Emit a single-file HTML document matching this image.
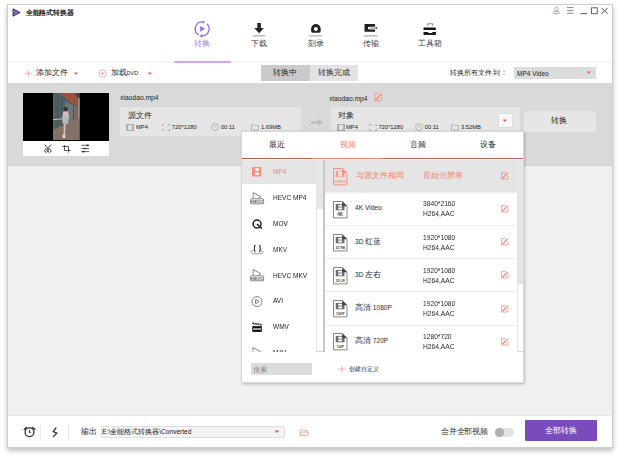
<!DOCTYPE html>
<html><head><meta charset="utf-8">
<style>
*{margin:0;padding:0;box-sizing:border-box;}
html,body{width:620px;height:459px;overflow:hidden;background:#fff;font-family:"Liberation Sans",sans-serif;color:#333;}
.a{position:absolute;white-space:nowrap;}
#win{position:absolute;left:7px;top:4px;width:606px;height:443.6px;background:#fff;border:1px solid #cdcdcd;box-shadow:0 2.5px 5px rgba(0,0,0,.27);}
.cj{font-size:7.5px;line-height:1;}
.cj2{font-size:7.5px;}
</style></head><body>
<div id="win"></div>

<!-- header -->
<svg class="a" style="left:12px;top:8px" width="9" height="9" viewBox="0 0 9 9"><path d="M1 0.8 L8.2 4.5 L1 8.2 Z" fill="#8a5cd6" stroke="#3a3a3a" stroke-width="0.9" stroke-linejoin="round"/></svg>
<div class="a" style="left:25.7px;top:9.9px;font-size:6.8px;letter-spacing:-0.15px;font-weight:bold;color:#222;line-height:1">全能格式转换器</div>

<!-- window controls -->
<svg class="a" style="left:550px;top:5px" width="60" height="12" viewBox="0 0 60 12">
  <g fill="none" stroke="#b88ef0" stroke-width="1"><path d="M6.4 6.2 L5.1 4.6 A1.6 1.6 0 1 1 7.7 4.6Z"/><ellipse cx="6.4" cy="7.5" rx="3.3" ry="1.25"/></g>
  <g stroke="#777" stroke-width="0.9"><path d="M17 2.6h6.6M17 5.4h6.6M17 8.2h6.6"/></g>
  <path d="M30.6 8.6h6.4" stroke="#666" stroke-width="1.1"/>
  <rect x="41.5" y="2.8" width="5.8" height="5.9" fill="none" stroke="#666" stroke-width="1"/>
  <path d="M51.6 2.8l6 6M57.6 2.8l-6 6" stroke="#555" stroke-width="1"/>
</svg>

<!-- nav -->
<svg class="a" style="left:194px;top:20px" width="17" height="18" viewBox="0 0 17 18">
  <g fill="none" stroke="#9c6ce6" stroke-width="1.35" stroke-linecap="round">
    <path d="M4.09 14.56 A7 7 0 0 1 8.4 1.9"/>
    <path d="M13.4 4.22 A7 7 0 0 1 8.0 15.9"/>
  </g>
  <path d="M8.6 0.2 L11.2 1.95 L8.6 3.7Z" fill="#9c6ce6"/>
  <path d="M8.1 14.1 L5.4 15.9 L8.1 17.7Z" fill="#9c6ce6"/>
  <path d="M6.1 6 L11.1 8.85 L6.1 11.7Z" fill="#9c6ce6"/>
</svg>
<div class="a cj" style="left:194px;top:40px;color:#a27ae4;font-size:7.5px">转换</div>

<svg class="a" style="left:252px;top:22px" width="14" height="15" viewBox="0 0 14 15">
  <path d="M5.3 1 h3.6 v4.9 h3 L7.1 11.2 2.2 5.9 h3.1z" fill="#252525"/>
  <rect x="1" y="13.1" width="12" height="1.4" fill="#b5b5b5"/>
</svg>
<div class="a cj" style="left:251.2px;top:40px;color:#3c3c3c;font-size:7.5px">下载</div>

<svg class="a" style="left:308px;top:22px" width="16" height="15" viewBox="0 0 16 15">
  <path fill-rule="evenodd" d="M3.1 6.9 A4.8 4.8 0 0 1 12.7 6.9 V9.1 Q12.7 10.7 11.1 10.7 H4.7 Q3.1 10.7 3.1 9.1 Z M5.9 6.9 A2 2 0 1 0 9.9 6.9 A2 2 0 1 0 5.9 6.9Z" fill="#222"/>
  <rect x="1.1" y="13.1" width="12.9" height="1.5" fill="#bdbdbd"/>
</svg>
<div class="a cj" style="left:307.5px;top:40px;color:#3c3c3c;font-size:7.5px">刻录</div>

<svg class="a" style="left:362px;top:22px" width="18" height="15" viewBox="0 0 18 15">
  <path d="M2.5 1.9 H12.6 Q13.1 1.9 13.1 2.4 V4.7 H7.2 A1.35 1.35 0 0 0 7.2 7.4 H13.1 V9.3 Q13.1 9.8 12.6 9.8 H2.5 Z" fill="#1e1e1e"/>
  <path d="M7.4 6.05 H14" stroke="#666" stroke-width="0.7"/>
  <circle cx="14.4" cy="6.1" r="0.95" fill="#333"/>
  <rect x="1.5" y="13.1" width="14.3" height="1.5" fill="#bdbdbd"/>
</svg>
<div class="a cj" style="left:363px;top:40px;color:#3c3c3c;font-size:7.5px">传输</div>

<svg class="a" style="left:422px;top:22px" width="16" height="14" viewBox="0 0 16 14">
  <path d="M5.6 3.7 V2.4 Q5.6 1.7 6.3 1.7 H10.1 Q10.8 1.7 10.8 2.4 V3.7" fill="none" stroke="#8a8a8a" stroke-width="1.1"/>
  <rect x="1.5" y="5.5" width="12.4" height="2.6" rx="0.4" fill="#1a1a1a"/>
  <path d="M1.5 10 H5.8 L6.8 11 H9.7 L10.7 10 H13.9 V12.9 H1.5 Z" fill="#1a1a1a"/>
</svg>
<div class="a cj" style="left:417.8px;top:40px;color:#3c3c3c;font-size:7.5px">工具箱</div>

<!-- nav underline -->
<div class="a" style="left:8px;top:61px;width:604px;height:2px;background:#f6f4fa"></div>
<div class="a" style="left:174px;top:61px;width:57px;height:2px;background:#cfa6f6"></div>

<!-- toolbar -->
<svg class="a" style="left:24px;top:69px" width="9" height="9" viewBox="0 0 9 9"><path d="M4.3 1v6.6M1 4.3h6.6" stroke="#f59a8b" stroke-width="0.8"/></svg>
<div class="a cj" style="left:35.5px;top:69.3px;color:#262626">添加文件</div>
<svg class="a" style="left:73px;top:72px" width="6" height="4" viewBox="0 0 6 4"><path d="M0.5 0.5h4.6L2.8 3z" fill="#f06a5a"/></svg>

<svg class="a" style="left:98px;top:68.5px" width="9" height="9" viewBox="0 0 9 9"><circle cx="4.5" cy="4.5" r="3.6" fill="none" stroke="#f59a8b" stroke-width="0.75"/><circle cx="4.5" cy="4.5" r="1.2" fill="#f59a8b"/></svg>
<div class="a cj" style="left:110.5px;top:69.3px;color:#262626">加载<span style="font-size:5.6px">DVD</span></div>
<svg class="a" style="left:146.5px;top:72px" width="6" height="4" viewBox="0 0 6 4"><path d="M0.5 0.5h4.6L2.8 3z" fill="#f06a5a"/></svg>

<div class="a" style="left:261px;top:65px;width:49px;height:16px;background:#cacaca"></div>
<div class="a" style="left:310px;top:65px;width:48px;height:16px;background:#e3e3e3"></div>
<div class="a cj" style="left:273px;top:69.3px;color:#262626;font-size:7.5px">转换中</div>
<div class="a cj" style="left:318px;top:69.3px;color:#262626;font-size:7.5px">转换完成</div>

<div class="a cj" style="left:449.7px;top:69px;color:#262626;font-size:7.4px;letter-spacing:0.15px">转换所有文件到<span style="margin-left:3.3px">:</span></div>
<div class="a" style="left:514px;top:66.5px;width:82px;height:12px;background:#dcdcdc"></div>
<div class="a" style="left:517px;top:70.6px;font-size:6.5px;line-height:1;color:#222">MP4 Video</div>
<svg class="a" style="left:585.6px;top:71.3px" width="6" height="4" viewBox="0 0 6 4"><path d="M0.5 0.5h4.6L2.8 3z" fill="#f06a5a"/></svg>

<!-- gray item area -->
<div class="a" style="left:8px;top:82.6px;width:604px;height:82.6px;background:#d9d9d9"></div>
<div class="a" style="left:8px;top:164.8px;width:604px;height:250px;background:#f0f0ef;border-top:1px solid #d3d3d3"></div>

<!-- thumbnail -->
<div class="a" style="left:23px;top:93px;width:86px;height:47.5px;background:#000"></div>
<svg class="a" style="left:52.9px;top:93.2px" width="26.8" height="47.2" viewBox="0 0 26.8 47.2">
  <defs><filter id="bl" x="-10%" y="-10%" width="120%" height="120%"><feGaussianBlur stdDeviation="0.7"/></filter><clipPath id="cp"><rect width="26.8" height="47.2"/></clipPath></defs>
  <g clip-path="url(#cp)"><g filter="url(#bl)">
  <rect x="-2" y="-2" width="31" height="52" fill="#4f5e62"/>
  <path d="M12 8 L26.8 16 V27 L12 32Z" fill="#68787b"/>
  <path d="M4.5 0 V40 M20.5 12 V30 M9 6 V36" stroke="#415053" stroke-width="0.8"/>
  <path d="M5 -1 H21.7 L25.1 5 V15.8Z" fill="#99513b"/>
  <path d="M21.7 -1 H28 V7 L25.1 5Z" fill="#3e4747"/>
  <rect x="25.1" y="5" width="3" height="44" fill="#8d9799"/>
  <rect x="21.4" y="16" width="3.7" height="13" fill="#8e6252"/>
  <path d="M-1 37 L28 24.5 V49 H-1Z" fill="#857266"/>
  <path d="M0 26.6 L9.5 26" stroke="#b9c3c5" stroke-width="1"/>
  <circle cx="12.8" cy="16.2" r="2.1" fill="#393332"/>
  <path d="M10 18.6 H15.5 L16 26 H9.5Z" fill="#d2c2b9"/>
  <path d="M9.2 23 H15.6 L15.3 30.8 H9.5Z" fill="#b9b8b5"/>
  <path d="M15.4 19 L18.2 21.5 L16 23Z" fill="#9b6a50"/>
  <path d="M10.6 30.8 H12.8 L12 43.5 H10.6Z" fill="#cfbcb2"/>
  <path d="M9.6 41.5 H12.3 V45 H9.6Z" fill="#dcdcdc"/>
  </g></g>
</svg>
<div class="a" style="left:23px;top:140.5px;width:86px;height:15px;background:#fff"></div>
<!-- tool icons -->
<svg class="a" style="left:43px;top:143px" width="10" height="11" viewBox="0 0 10 11">
  <g fill="none" stroke="#3a3a3a" stroke-width="0.9"><path d="M1.8 1.5 L5.6 6.3 M8.1 1.5 L4.3 6.3"/><circle cx="3.2" cy="7.7" r="1.55"/><circle cx="6.6" cy="7.7" r="1.55"/></g>
</svg>
<svg class="a" style="left:61px;top:144px" width="11" height="10" viewBox="0 0 11 10">
  <g fill="none" stroke="#3a3a3a" stroke-width="0.85"><path d="M3.5 1 V6.5 H9.6 M1.2 2.5 H7.5 V8.6"/></g>
</svg>
<svg class="a" style="left:81px;top:144px" width="10" height="10" viewBox="0 0 10 10">
  <g stroke="#3a3a3a" stroke-width="0.75"><path d="M0.3 1.3 H8.2 M0.3 4.5 H8.2 M0.3 7.6 H8.2"/></g>
  <g fill="#2a2a2a"><ellipse cx="6.6" cy="1.3" rx="1.3" ry="0.85"/><ellipse cx="3.9" cy="4.5" rx="1.3" ry="0.85"/><ellipse cx="2.4" cy="7.6" rx="1.3" ry="0.85"/></g>
</svg>

<!-- source name -->
<div class="a" style="left:120.2px;top:95px;font-size:6.7px;line-height:1;color:#222">xiaodao.mp4</div>
<div class="a" style="left:120px;top:107px;width:181px;height:29px;background:#e5e5e5"></div>
<div class="a cj" style="left:128px;top:111.5px;color:#262626">源文件</div>
<svg class="a" style="left:126.4px;top:123.5px" width="8" height="7" viewBox="0 0 8 7"><rect x="0.5" y="0.5" width="7" height="6" fill="none" stroke="#ababab" stroke-width="1"/><rect x="1" y="1" width="1.3" height="5" fill="#b8b8b8"/><rect x="5.7" y="1" width="1.3" height="5" fill="#b8b8b8"/></svg><svg class="a" style="left:161.9px;top:123.5px" width="8" height="7" viewBox="0 0 8 7"><path d="M0.5 2.3V0.5H2.3M5.7 0.5H7.5V2.3M7.5 4.7V6.5H5.7M2.3 6.5H0.5V4.7" fill="none" stroke="#ababab" stroke-width="0.9"/></svg><svg class="a" style="left:211.1px;top:123px" width="8" height="8" viewBox="0 0 8 8"><circle cx="4" cy="4" r="3.4" fill="none" stroke="#ababab" stroke-width="0.8"/><path d="M3.8 2.2V4.2H5.2" fill="none" stroke="#ababab" stroke-width="0.6"/></svg><svg class="a" style="left:250.6px;top:123.5px" width="8" height="7" viewBox="0 0 8 7"><path d="M0.5 0.8H3L3.8 1.6H7.5V6.2H0.5Z" fill="none" stroke="#ababab" stroke-width="0.8"/></svg><div class="a" style="left:136px;top:125.4px;font-size:5.8px;line-height:1;color:#1e1e1e">MP4</div><div class="a" style="left:171.8px;top:125.4px;font-size:5.8px;line-height:1;color:#1e1e1e">720*1280</div><div class="a" style="left:220.9px;top:125.4px;font-size:5.8px;line-height:1;color:#1e1e1e">00:11</div><div class="a" style="left:260.9px;top:125.4px;font-size:5.8px;line-height:1;color:#1e1e1e">1.69MB</div>

<!-- arrow -->
<svg class="a" style="left:310px;top:118px" width="14" height="9" viewBox="0 0 14 9"><path d="M1 3.3h7V0.8l5 3.7-5 3.7V5.7H1z" fill="#bdbdbd"/></svg>

<!-- target -->
<div class="a" style="left:329.2px;top:95.5px;font-size:6.7px;line-height:1;color:#222">xiaodao.mp4</div>
<svg class="a" style="left:373.5px;top:93px" width="9" height="9" viewBox="0 0 9 9"><path d="M5 0.7 H0.8 V7.8 H7.8 V3.7" fill="none" stroke="#f49a8a" stroke-width="0.95"/><path d="M1.9 6.8 L7.3 1.4" stroke="#f5897a" stroke-width="1.4" stroke-linecap="round"/></svg>
<div class="a" style="left:330.5px;top:107px;width:189px;height:29px;background:#e5e5e5"></div>
<div class="a cj" style="left:337.6px;top:111.8px;color:#262626">对象</div><svg class="a" style="left:336.5px;top:123.5px" width="8" height="7" viewBox="0 0 8 7"><rect x="0.5" y="0.5" width="7" height="6" fill="none" stroke="#ababab" stroke-width="1"/><rect x="1" y="1" width="1.3" height="5" fill="#b8b8b8"/><rect x="5.7" y="1" width="1.3" height="5" fill="#b8b8b8"/></svg><svg class="a" style="left:369px;top:123.5px" width="8" height="7" viewBox="0 0 8 7"><path d="M0.5 2.3V0.5H2.3M5.7 0.5H7.5V2.3M7.5 4.7V6.5H5.7M2.3 6.5H0.5V4.7" fill="none" stroke="#ababab" stroke-width="0.9"/></svg><svg class="a" style="left:415px;top:123px" width="8" height="8" viewBox="0 0 8 8"><circle cx="4" cy="4" r="3.4" fill="none" stroke="#ababab" stroke-width="0.8"/><path d="M3.8 2.2V4.2H5.2" fill="none" stroke="#ababab" stroke-width="0.6"/></svg><svg class="a" style="left:450.8px;top:123.5px" width="8" height="7" viewBox="0 0 8 7"><path d="M0.5 0.8H3L3.8 1.6H7.5V6.2H0.5Z" fill="none" stroke="#ababab" stroke-width="0.8"/></svg><div class="a" style="left:346px;top:125.4px;font-size:5.8px;line-height:1;color:#1e1e1e">MP4</div><div class="a" style="left:378.4px;top:125.4px;font-size:5.8px;line-height:1;color:#1e1e1e">720*1280</div><div class="a" style="left:424.7px;top:125.4px;font-size:5.8px;line-height:1;color:#1e1e1e">00:11</div><div class="a" style="left:461px;top:125.4px;font-size:5.8px;line-height:1;color:#1e1e1e">3.52MB</div>
<div class="a" style="left:497.5px;top:113.2px;width:15px;height:15.3px;background:#f8f8f8;border:1px solid #dcdcdc;border-radius:1.5px"></div>
<svg class="a" style="left:502px;top:119px" width="6" height="4" viewBox="0 0 6 4"><path d="M0.5 0.5h4.6L2.8 3z" fill="#f05a4a"/></svg>

<div class="a" style="left:524px;top:111px;width:72px;height:20.7px;background:#e6e6e6;border-radius:1.5px"></div>
<div class="a cj" style="left:551.3px;top:117.2px;color:#222;font-size:7.7px">转换</div>

<!-- footer -->
<div class="a" style="left:8px;top:414.5px;width:604px;height:1px;background:#e8e8e8"></div>
<svg class="a" style="left:23px;top:426px" width="13" height="13" viewBox="0 0 13 13">
  <circle cx="6.5" cy="6.3" r="4.4" fill="none" stroke="#2e2e2e" stroke-width="1.3"/>
  <path d="M1.2 3.4 L3.3 1.5 M11.8 3.4 L9.7 1.5" stroke="#2e2e2e" stroke-width="1.4" stroke-linecap="round"/>
  <path d="M5.9 3.9 H6.9 V5.6 L8.6 6.8 L5.9 6.8Z" fill="#2e2e2e"/>
</svg>
<div class="a" style="left:40px;top:424px;width:1px;height:16px;background:#ececec"></div>
<svg class="a" style="left:51px;top:427px" width="8" height="11" viewBox="0 0 8 11"><path d="M5 0.9 L2.2 4.6 L5.9 6 L2.4 9.6" fill="none" stroke="#2e2e2e" stroke-width="1.3" stroke-linecap="round" stroke-linejoin="round"/></svg>
<div class="a" style="left:68px;top:424px;width:1px;height:16px;background:#ececec"></div>
<div class="a cj" style="left:80.5px;top:427.9px;color:#262626">输出</div>
<div class="a" style="left:100.5px;top:425.5px;width:184px;height:12.5px;background:#f3f3f3;border:1px solid #dedede;border-radius:2px"></div>
<div class="a" style="left:102.3px;top:429px;font-size:6.55px;line-height:1;color:#222">E:\全能格式转换器\Converted</div>
<svg class="a" style="left:274px;top:430px" width="6" height="4" viewBox="0 0 6 4"><path d="M0.5 0.5h4.6L2.8 3z" fill="#f05a4a"/></svg>
<svg class="a" style="left:298.6px;top:428.6px" width="11" height="8" viewBox="0 0 11 8"><path d="M1 6.6 V0.7 H3.9 L4.6 1.6 H8.4 V2.9 M1 6.6 H8.5 L9.4 3.1 H2.4 L1 6.6" fill="none" stroke="#f5a090" stroke-width="0.85" stroke-linejoin="round"/></svg>

<div class="a cj" style="left:441px;top:427.8px;color:#333;font-size:7.5px;letter-spacing:-0.25px">合并全部视频</div>
<div class="a" style="left:494.5px;top:428px;width:19.5px;height:9px;border-radius:4.5px;background:#e2e2e2"></div>
<div class="a" style="left:494.5px;top:428px;width:9px;height:9px;border-radius:50%;background:#b0b0b0"></div>
<div class="a" style="left:525px;top:420px;width:72px;height:20.5px;background:#7a4bba;border-radius:1px"></div>
<div class="a cj" style="left:545px;top:427px;color:#fff">全部转换</div>

<!-- popup -->
<div class="a" style="left:241px;top:131.2px;width:282.5px;height:252px;background:#fff;border:1px solid #d8d8d8;box-shadow:0.5px 1px 3px rgba(0,0,0,.28)"></div>
<div class="a cj" style="left:269.1px;top:141px;color:#262626">最近</div>
<div class="a cj" style="left:339.6px;top:141px;color:#f2806e">视频</div>
<div class="a cj" style="left:410.0px;top:141px;color:#262626">音频</div>
<div class="a cj" style="left:480.3px;top:141px;color:#262626">设备</div>
<div class="a" style="left:242px;top:157.9px;width:281px;height:1.4px;background:#bd5d50"></div>
<div class="a" style="left:312.2px;top:157.9px;width:70.4px;height:1.4px;background:#f4826f"></div>
<div class="a" style="left:242px;top:159.5px;width:74px;height:192px;overflow:hidden">
<div class="a" style="left:0;top:0;width:74px;height:24.8px;background:#e5e5e5"></div>
<div class="a" style="left:30.8px;top:8.60px;font-size:7.6px;line-height:1;color:#f2806e;transform:scaleX(.86);transform-origin:0 0">MP4</div>
<svg class="a" style="left:9.9px;top:7.5px" width="10" height="10" viewBox="0 0 10 10"><rect x="0" y="0" width="9.4" height="9.6" rx="0.5" fill="#f39080"/><rect x="3.1" y="1.1" width="3.7" height="2.6" fill="#fff"/><rect x="3.1" y="5.5" width="3.7" height="2.6" fill="#fff"/></svg>
<div class="a" style="left:30.8px;top:34.45px;font-size:7.6px;line-height:1;color:#1a1a1a;transform:scaleX(.86);transform-origin:0 0">HEVC MP4</div>
<svg class="a" style="left:8px;top:32.5px" width="15" height="13" viewBox="0 0 15 13"><path d="M3.2 0.6 L10.9 4.6 L8 6.6 M3.2 0.6 V6.6" fill="none" stroke="#666" stroke-width="0.8"/><rect x="0.6" y="6.8" width="13" height="5" rx="0.8" fill="#fff" stroke="#666" stroke-width="0.8"/><text x="7.1" y="10.9" font-family="Liberation Sans" font-size="4.4" font-weight="bold" text-anchor="middle" fill="#555">HEVC</text></svg>
<div class="a" style="left:30.8px;top:60.30px;font-size:7.6px;line-height:1;color:#1a1a1a;transform:scaleX(.86);transform-origin:0 0">MOV</div>
<svg class="a" style="left:9.5px;top:59px" width="11" height="11" viewBox="0 0 11 11"><circle cx="5.05" cy="5.0" r="4.0" fill="none" stroke="#222" stroke-width="1.5"/><path d="M5 5 L9.8 9.6" stroke="#222" stroke-width="1.6"/></svg>
<div class="a" style="left:30.8px;top:86.15px;font-size:7.6px;line-height:1;color:#1a1a1a;transform:scaleX(.86);transform-origin:0 0">MKV</div>
<svg class="a" style="left:8px;top:85.5px" width="15" height="10" viewBox="0 0 15 10"><path d="M3.3 5.3 Q0.8 6.1 0.8 7.1 Q1.3 8.9 7 8.9 Q12.7 8.9 13.2 7.1 Q13.2 6.1 10.9 5.3" fill="none" stroke="#8a8a8a" stroke-width="0.8"/><path d="M5.5 0.3 Q4.5 0.3 4.5 1.4 V2.5 Q4.5 3.5 3.8 3.5 Q4.5 3.5 4.5 4.5 V5.6 Q4.5 6.7 5.5 6.7 M9.1 0.3 Q10.1 0.3 10.1 1.4 V2.5 Q10.1 3.5 10.8 3.5 Q10.1 3.5 10.1 4.5 V5.6 Q10.1 6.7 9.1 6.7" fill="none" stroke="#2a2a2a" stroke-width="1.1"/></svg>
<div class="a" style="left:30.8px;top:112.00px;font-size:7.6px;line-height:1;color:#1a1a1a;transform:scaleX(.86);transform-origin:0 0">HEVC MKV</div>
<svg class="a" style="left:8px;top:109.9px" width="15" height="13" viewBox="0 0 15 13"><path d="M3.2 0.6 L10.9 4.6 L8 6.6 M3.2 0.6 V6.6" fill="none" stroke="#666" stroke-width="0.8"/><rect x="0.6" y="6.8" width="13" height="5" rx="0.8" fill="#fff" stroke="#666" stroke-width="0.8"/><text x="7.1" y="10.9" font-family="Liberation Sans" font-size="4.4" font-weight="bold" text-anchor="middle" fill="#555">HEVC</text></svg>
<div class="a" style="left:30.8px;top:137.85px;font-size:7.6px;line-height:1;color:#1a1a1a;transform:scaleX(.86);transform-origin:0 0">AVI</div>
<svg class="a" style="left:9px;top:136px" width="12" height="12" viewBox="0 0 12 12"><circle cx="5.95" cy="5.6" r="5" fill="none" stroke="#777" stroke-width="0.9"/><path d="M4.6 3.4 L8.2 5.6 L4.6 7.8Z" fill="none" stroke="#777" stroke-width="0.9" stroke-linejoin="round"/></svg>
<div class="a" style="left:30.8px;top:163.70px;font-size:7.6px;line-height:1;color:#1a1a1a;transform:scaleX(.86);transform-origin:0 0">WMV</div>
<svg class="a" style="left:10px;top:162.5px" width="11" height="11" viewBox="0 0 11 11"><path d="M0.5 0.4 L9.8 2.0 L9.5 3.6 L0.2 2.0Z" fill="#1e1e1e"/><g fill="#fff"><rect x="2.2" y="1.1" width="0.9" height="0.9" transform="rotate(10 2.6 1.5)"/><rect x="4.6" y="1.5" width="0.9" height="0.9" transform="rotate(10 5 2)"/><rect x="7" y="1.9" width="0.9" height="0.9" transform="rotate(10 7.4 2.3)"/></g><rect x="0.3" y="4.1" width="9.5" height="5.8" fill="#111"/><rect x="1.1" y="6.4" width="7.9" height="1.2" fill="#fff"/></svg>
<div class="a" style="left:30.8px;top:189.55px;font-size:7.6px;line-height:1;color:#1a1a1a;transform:scaleX(.86);transform-origin:0 0">M4V</div>
<svg class="a" style="left:9px;top:187px" width="12" height="8" viewBox="0 0 12 8"><path d="M2 0.6 V4.5 M2 0.6 L10 5" fill="none" stroke="#777" stroke-width="0.9"/></svg>
</div>
<div class="a" style="left:316px;top:159.5px;width:7.5px;height:192px;background:#fff;border-left:1px solid #e4e4e4;border-bottom:1px solid #d6d6d6"></div>
<div class="a" style="left:316px;top:159.5px;width:7.5px;height:49px;background:#e6e6e6"></div>
<div class="a" style="left:323px;top:159.5px;width:1.5px;height:192.5px;background:#c6c6c6"></div>
<div class="a" style="left:324.5px;top:159.5px;width:192px;height:192px;overflow:hidden">
<div class="a" style="left:0;top:0;width:192px;height:32.4px;background:#e5e5e5"></div>
<svg class="a" style="left:8.6px;top:8.20px" width="15" height="18" viewBox="0 0 15 18"><path d="M0.5 0.5 H9.4 L14 5.1 V16.9 H0.5 Z" fill="none" stroke="#f39080" stroke-width="0.95"/><path d="M9.2 0.5 V5.3 H14Z" fill="#f39080"/><rect x="2.7" y="2.9" width="8.8" height="6.4" fill="#f39080" opacity="0.78"/><rect x="5.3" y="3.8" width="3.7" height="1.8" fill="#fff"/><rect x="5.3" y="6.5" width="3.7" height="1.9" fill="#fff"/><text x="7.25" y="15.2" font-family="Liberation Sans" font-size="2.7" font-weight="bold" text-anchor="middle" fill="#f39080">SOURCE</text></svg>
<div class="a cj" style="left:31px;top:12.00px;color:#f2806e">与源文件相同</div>
<div class="a cj" style="left:98.5px;top:12.00px;color:#f2806e">原始分辨率</div>
<svg class="a" style="left:176.3px;top:12.10px" width="8" height="8" viewBox="0 0 8 8"><path d="M4.6 0.6 H0.6 V7 H7 V3.3" fill="none" stroke="#f49a8a" stroke-width="0.9"/><path d="M1.7 6 L6.6 1.1" stroke="#f5897a" stroke-width="1.3" stroke-linecap="round"/></svg>
<div class="a" style="left:0;top:32.05px;width:192px;height:1px;background:#ececec"></div>
<svg class="a" style="left:8.6px;top:41.40px" width="15" height="18" viewBox="0 0 15 18"><path d="M0.5 0.5 H9.4 L14 5.1 V16.9 H0.5 Z" fill="none" stroke="#808080" stroke-width="0.95"/><path d="M9.2 0.5 V5.3 H14Z" fill="#444"/><rect x="2.7" y="2.9" width="8.8" height="6.4" fill="#444" opacity="0.78"/><rect x="5.3" y="3.8" width="3.7" height="1.8" fill="#fff"/><rect x="5.3" y="6.5" width="3.7" height="1.9" fill="#fff"/><text x="7.25" y="15.2" font-family="Liberation Sans" font-size="4.6" font-weight="bold" text-anchor="middle" fill="#444">4K</text></svg>
<div class="a" style="left:30.5px;top:44.75px;font-size:6.6px;line-height:8px;color:#2a2a2a">4K Video</div>
<div class="a" style="left:98.3px;top:39.85px;font-size:7.1px;line-height:10.1px;color:#2a2a2a;transform:scaleX(.94);transform-origin:0 0">3840*2160<br>H264,AAC</div>
<svg class="a" style="left:176.3px;top:45.35px" width="8" height="8" viewBox="0 0 8 8"><path d="M4.6 0.6 H0.6 V7 H7 V3.3" fill="none" stroke="#f49a8a" stroke-width="0.9"/><path d="M1.7 6 L6.6 1.1" stroke="#f5897a" stroke-width="1.3" stroke-linecap="round"/></svg>
<div class="a" style="left:0;top:65.30px;width:192px;height:1px;background:#ececec"></div>
<svg class="a" style="left:8.6px;top:74.40px" width="15" height="18" viewBox="0 0 15 18"><path d="M0.5 0.5 H9.4 L14 5.1 V16.9 H0.5 Z" fill="none" stroke="#808080" stroke-width="0.95"/><path d="M9.2 0.5 V5.3 H14Z" fill="#444"/><rect x="2.7" y="2.9" width="8.8" height="6.4" fill="#444" opacity="0.78"/><rect x="5.3" y="3.8" width="3.7" height="1.8" fill="#fff"/><rect x="5.3" y="6.5" width="3.7" height="1.9" fill="#fff"/><text x="7.25" y="15.2" font-family="Liberation Sans" font-size="3.2" font-weight="bold" text-anchor="middle" fill="#444">3D RB</text></svg>
<div class="a" style="left:30.5px;top:78.00px;font-size:6.6px;line-height:8px;color:#2a2a2a">3D <span class="cj2">红蓝</span></div>
<div class="a" style="left:98.3px;top:73.10px;font-size:7.1px;line-height:10.1px;color:#2a2a2a;transform:scaleX(.94);transform-origin:0 0">1920*1080<br>H264,AAC</div>
<svg class="a" style="left:176.3px;top:78.60px" width="8" height="8" viewBox="0 0 8 8"><path d="M4.6 0.6 H0.6 V7 H7 V3.3" fill="none" stroke="#f49a8a" stroke-width="0.9"/><path d="M1.7 6 L6.6 1.1" stroke="#f5897a" stroke-width="1.3" stroke-linecap="round"/></svg>
<div class="a" style="left:0;top:98.55px;width:192px;height:1px;background:#ececec"></div>
<svg class="a" style="left:8.6px;top:107.50px" width="15" height="18" viewBox="0 0 15 18"><path d="M0.5 0.5 H9.4 L14 5.1 V16.9 H0.5 Z" fill="none" stroke="#808080" stroke-width="0.95"/><path d="M9.2 0.5 V5.3 H14Z" fill="#444"/><rect x="2.7" y="2.9" width="8.8" height="6.4" fill="#444" opacity="0.78"/><rect x="5.3" y="3.8" width="3.7" height="1.8" fill="#fff"/><rect x="5.3" y="6.5" width="3.7" height="1.9" fill="#fff"/><text x="7.25" y="15.2" font-family="Liberation Sans" font-size="3.2" font-weight="bold" text-anchor="middle" fill="#444">3D LR</text></svg>
<div class="a" style="left:30.5px;top:111.25px;font-size:6.6px;line-height:8px;color:#2a2a2a">3D <span class="cj2">左右</span></div>
<div class="a" style="left:98.3px;top:106.35px;font-size:7.1px;line-height:10.1px;color:#2a2a2a;transform:scaleX(.94);transform-origin:0 0">1920*1080<br>H264,AAC</div>
<svg class="a" style="left:176.3px;top:111.85px" width="8" height="8" viewBox="0 0 8 8"><path d="M4.6 0.6 H0.6 V7 H7 V3.3" fill="none" stroke="#f49a8a" stroke-width="0.9"/><path d="M1.7 6 L6.6 1.1" stroke="#f5897a" stroke-width="1.3" stroke-linecap="round"/></svg>
<div class="a" style="left:0;top:131.80px;width:192px;height:1px;background:#ececec"></div>
<svg class="a" style="left:8.6px;top:140.70px" width="15" height="18" viewBox="0 0 15 18"><path d="M0.5 0.5 H9.4 L14 5.1 V16.9 H0.5 Z" fill="none" stroke="#808080" stroke-width="0.95"/><path d="M9.2 0.5 V5.3 H14Z" fill="#444"/><rect x="2.7" y="2.9" width="8.8" height="6.4" fill="#444" opacity="0.78"/><rect x="5.3" y="3.8" width="3.7" height="1.8" fill="#fff"/><rect x="5.3" y="6.5" width="3.7" height="1.9" fill="#fff"/><text x="7.25" y="15.2" font-family="Liberation Sans" font-size="3.0" font-weight="bold" text-anchor="middle" fill="#444">1080P</text></svg>
<div class="a" style="left:30.5px;top:144.50px;font-size:6.6px;line-height:8px;color:#2a2a2a"><span class="cj2">高清</span> 1080P</div>
<div class="a" style="left:98.3px;top:139.60px;font-size:7.1px;line-height:10.1px;color:#2a2a2a;transform:scaleX(.94);transform-origin:0 0">1920*1080<br>H264,AAC</div>
<svg class="a" style="left:176.3px;top:145.10px" width="8" height="8" viewBox="0 0 8 8"><path d="M4.6 0.6 H0.6 V7 H7 V3.3" fill="none" stroke="#f49a8a" stroke-width="0.9"/><path d="M1.7 6 L6.6 1.1" stroke="#f5897a" stroke-width="1.3" stroke-linecap="round"/></svg>
<div class="a" style="left:0;top:165.05px;width:192px;height:1px;background:#ececec"></div>
<svg class="a" style="left:8.6px;top:173.90px" width="15" height="18" viewBox="0 0 15 18"><path d="M0.5 0.5 H9.4 L14 5.1 V16.9 H0.5 Z" fill="none" stroke="#808080" stroke-width="0.95"/><path d="M9.2 0.5 V5.3 H14Z" fill="#444"/><rect x="2.7" y="2.9" width="8.8" height="6.4" fill="#444" opacity="0.78"/><rect x="5.3" y="3.8" width="3.7" height="1.8" fill="#fff"/><rect x="5.3" y="6.5" width="3.7" height="1.9" fill="#fff"/><text x="7.25" y="15.2" font-family="Liberation Sans" font-size="3.2" font-weight="bold" text-anchor="middle" fill="#444">720P</text></svg>
<div class="a" style="left:30.5px;top:177.75px;font-size:6.6px;line-height:8px;color:#2a2a2a"><span class="cj2">高清</span> 720P</div>
<div class="a" style="left:98.3px;top:172.85px;font-size:7.1px;line-height:10.1px;color:#2a2a2a;transform:scaleX(.94);transform-origin:0 0">1280*720<br>H264,AAC</div>
<svg class="a" style="left:176.3px;top:178.35px" width="8" height="8" viewBox="0 0 8 8"><path d="M4.6 0.6 H0.6 V7 H7 V3.3" fill="none" stroke="#f49a8a" stroke-width="0.9"/><path d="M1.7 6 L6.6 1.1" stroke="#f5897a" stroke-width="1.3" stroke-linecap="round"/></svg>
</div>
<div class="a" style="left:516.5px;top:159.5px;width:6.5px;height:192px;background:#fff;border-left:1px solid #e4e4e4;border-bottom:1px solid #d6d6d6"></div>
<div class="a" style="left:516.5px;top:159.5px;width:6.5px;height:124.3px;background:#e6e6e6"></div>
<div class="a" style="left:251px;top:362.5px;width:60.5px;height:12px;background:#dcdcdc"></div>
<div class="a" style="left:253px;top:365.6px;font-size:7.2px;line-height:1;color:#8a8a8a">搜索</div>
<svg class="a" style="left:337.6px;top:365.2px" width="8" height="8" viewBox="0 0 8 8"><path d="M4 0.5v7M0.5 4h7" stroke="#f59a8b" stroke-width="0.75"/></svg>
<div class="a" style="left:348.5px;top:366px;font-size:6.2px;line-height:1;color:#2a2a2a">创建自定义</div>

</body></html>
